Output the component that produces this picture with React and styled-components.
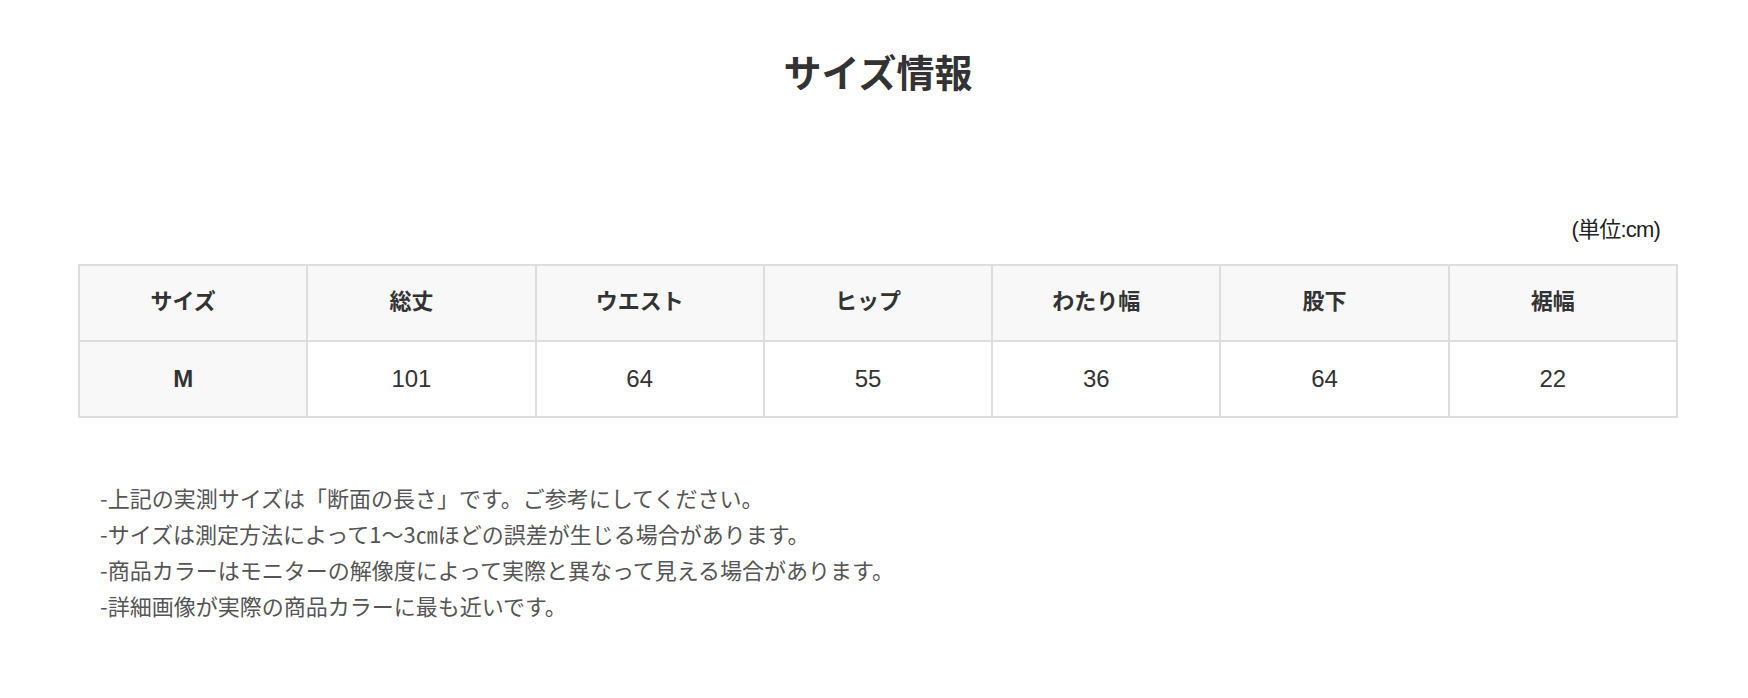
import React from "react";
import styled, { createGlobalStyle } from "styled-components";

const GlobalStyle = createGlobalStyle`
  html, body {
    margin: 0;
    padding: 0;
    background: #ffffff;
  }
  body {
    font-family: "Liberation Sans", "Noto Sans CJK JP", sans-serif;
    color: #333333;
  }
`;

const Page = styled.div`
  width: 1600px;
  margin: 0 0 0 78px;
  padding-top: 52px;
  padding-bottom: 60px;
  display: flex;
  flex-direction: column;
`;

const Title = styled.h2`
  margin: 0;
  text-align: center;
  font-family: "Noto Sans CJK JP", sans-serif;
  font-weight: 700;
  font-size: 38px;
  line-height: 38px;
  color: #333333;
`;

const Unit = styled.div`
  margin-top: 128px;
  align-self: flex-end;
  padding-right: 18px;
  font-family: "Liberation Sans", "Noto Sans CJK JP", sans-serif;
  font-size: 22px;
  line-height: 24px;
  letter-spacing: -0.8px;
  color: #222222;
`;

const Table = styled.table`
  margin-top: 22px;
  width: 1600px;
  table-layout: fixed;
  border-collapse: separate;
  border-spacing: 0;
  border-top: 2px solid #dddddd;
  border-left: 2px solid #dddddd;
`;

const Cell = styled.td`
  padding: ${(p) => (p.$head ? "0 20px 8px 0" : "0 20px 0 0")};
  height: ${(p) => (p.$head ? "66px" : "74px")};
  line-height: ${(p) => (p.$head ? "66px" : "74px")};
  text-align: center;
  vertical-align: middle;
  border-right: 2px solid #dddddd;
  border-bottom: 2px solid #dddddd;
  background: ${(p) => (p.$shaded ? "#f8f8f8" : "#ffffff")};
  color: #333333;
  font-family: ${(p) =>
    p.$head
      ? `"Noto Sans CJK JP", sans-serif`
      : `"Liberation Sans", "Noto Sans CJK JP", sans-serif`};
  font-weight: ${(p) => (p.$bold ? 700 : 400)};
  font-size: ${(p) => (p.$head ? "22px" : "24px")};
`;

const Notes = styled.div`
  margin-top: 61px;
  padding-left: 22px;
  display: flex;
  flex-direction: column;
`;

const Note = styled.p`
  margin: 0;
  font-family: "Noto Sans CJK JP", sans-serif;
  font-size: 22px;
  line-height: 36px;
  color: #555555;
`;

const headers = ["サイズ", "総丈", "ウエスト", "ヒップ", "わたり幅", "股下", "裾幅"];
const values = ["M", "101", "64", "55", "36", "64", "22"];

const notes = [
  "-上記の実測サイズは「断面の長さ」です。ご参考にしてください。",
  "-サイズは測定方法によって1～3㎝ほどの誤差が生じる場合があります。",
  "-商品カラーはモニターの解像度によって実際と異なって見える場合があります。",
  "-詳細画像が実際の商品カラーに最も近いです。",
];

export default function App() {
  return (
    <>
      <GlobalStyle />
      <Page>
        <Title>サイズ情報</Title>
        <Unit>(単位:cm)</Unit>
        <Table>
          <tbody>
            <tr>
              {headers.map((h) => (
                <Cell key={h} $head $bold $shaded>
                  {h}
                </Cell>
              ))}
            </tr>
            <tr>
              {values.map((v, i) => (
                <Cell key={i} $bold={i === 0} $shaded={i === 0}>
                  {v}
                </Cell>
              ))}
            </tr>
          </tbody>
        </Table>
        <Notes>
          {notes.map((n) => (
            <Note key={n}>{n}</Note>
          ))}
        </Notes>
      </Page>
    </>
  );
}
